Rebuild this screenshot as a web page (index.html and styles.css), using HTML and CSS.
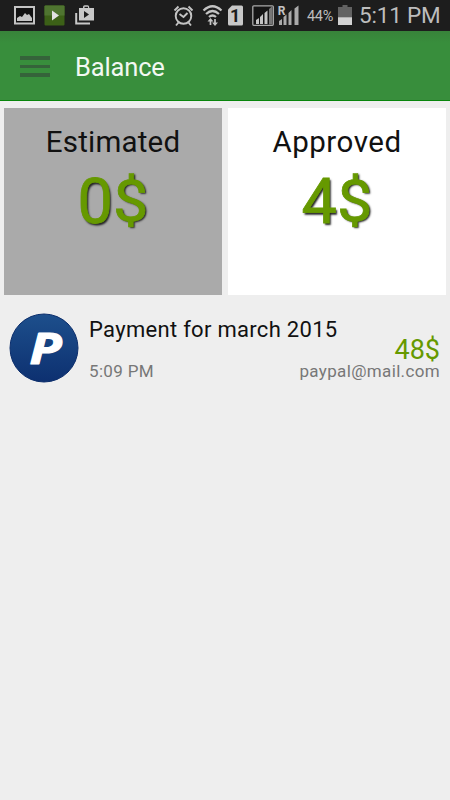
FILE: index.html
```html
<!DOCTYPE html>
<html lang="en">
<head>
<meta charset="utf-8">
<title>Balance</title>
<link rel="stylesheet" href="styles.css">
</head>
<body>
<header class="status">
  <svg class="status-icons" width="100" height="31" viewBox="0 0 100 31">
    <rect x="15" y="7" width="19" height="16.5" fill="#111" stroke="#c4c4c4" stroke-width="2"/>
    <path d="M17 21v-3l3-2 2 1 3-4 2 2 2-1 3 4v3z" fill="#c4c4c4"/>
    <rect x="44.5" y="5.500" width="20" height="20" rx="1" fill="#3c6017"/>
    <path d="M44.500 6.500q0-1 1-1h18q1 0 1 1v9h-20z" fill="#4f7430"/>
    <path d="M52 10.500v10l7-5z" fill="#e2e2e2"/>
    <path d="M79 8h4V7q0-1.700 1.700-1.700h2.800q1.700 0 1.700 1.700v1H94v12.500H79zm5.500 0H88V6.800h-3.500z" fill="#c8c8c8" fill-rule="evenodd"/>
    <path d="M84 11v7l5-3.500z" fill="#1c1c1c"/>
    <path d="M76.200 13v10.500H90" fill="none" stroke="#c8c8c8" stroke-width="2"/>
  </svg>
  <svg class="status-icons" width="130" height="31" viewBox="170 0 130 31">
    <g fill="none" stroke="#c4c4c4" stroke-width="1.900">
      <circle cx="183.500" cy="16" r="7.800"/>
      <path d="M179.500 14l4 3 4-4M178.500 22.500l-2.500 3M188.500 22.500l2.500 3M174.500 10.500l4-4M192.500 10.500l-4-4"/>
      <path d="M203.500 10.500q9-8.500 18 0M206 14q6.500-6 13 0M209 17q3.500-3 7 0" stroke-width="2.200"/>
      <path d="M210.500 25v-5M215 19v5" stroke-width="1.700"/>
    </g>
    <path d="M207.500 21.500h6l-3-3.500zM212 22.500h6l-3 3.500z" fill="#c4c4c4"/>
    <path d="M228 9.500l4-4h9.500q1.500 0 1.500 1.500v17q0 1.500-1.500 1.500h-12q-1.500 0-1.500-1.500z" fill="#c8c8c8"/>
    <text class="sim" x="235.200" y="22.300">1</text>
    <rect x="252.800" y="5.800" width="20.500" height="19.500" rx="1" fill="#151515" stroke="#aaa" stroke-width="1.300"/>
    <path d="M269 9l3.500-3v18.500H269z" fill="#777"/>
    <path d="M256 24v-4l3-2v6zM260 24v-7l3-3v10zM264.500 24V13l3-2.500V24z" fill="#c4c4c4"/>
    <text class="roam" x="281.500" y="15">R</text>
    <path d="M279 25v-4l3-2v6zM283.500 25v-8l3-2.500V25zM288.500 25V13l3-3v15zM294.500 25V8.500l4-3V25z" fill="#aaa"/>
  </svg>
  <span class="percent">44%</span>
  <svg class="battery" width="15" height="31" viewBox="0 0 15 31">
    <path d="M0 7h4.500V5h5v2H14v18H0z" fill="#626262"/>
    <path d="M0 17.300h14V25H0z" fill="#d2d2d2"/>
  </svg>
  <span class="clock">5:11 PM</span>
</header>
<nav class="bar">
  <div class="menu"><i></i><i></i><i></i></div>
  <h1>Balance</h1>
</nav>
<main>
  <section class="cards">
    <div class="card estimated"><h2>Estimated</h2><p>0<span>$</span></p></div>
    <div class="card approved"><h2>Approved</h2><p>4<span>$</span></p></div>
  </section>
  <article class="payment">
    <svg class="logo" width="70" height="70" viewBox="0 0 70 70">
      <defs><linearGradient id="blue" x2="0" y2="1"><stop stop-color="#1d4f8c"/><stop offset="1" stop-color="#0d3070"/></linearGradient></defs>
      <circle cx="35" cy="35" r="34" fill="url(#blue)" stroke="#0c2e6c"/>
      <text class="logo-letter" transform="translate(20.500 50.500) scale(1.220 1)">P</text>
    </svg>
    <div class="details"><h3>Payment for march 2015</h3><span class="time">5:09 PM</span></div>
    <div class="amount"><strong>48$</strong><span>paypal@mail.com</span></div>
  </article>
</main>
</body>
</html>
```

FILE: styles.css
```css
* { box-sizing: border-box; margin: 0; padding: 0; }
body { width: 450px; height: 800px; overflow: hidden; background: #eee; color: #111; font-family: Roboto, sans-serif; }
h1, h2, h3, strong { font-weight: 400; }
svg { display: block; flex: none; }
.status { display: flex; height: 31px; background: #1d1d1d; color: #bdbdbd; white-space: nowrap; }
.status-icons + .status-icons { margin-left: 70px; }
.sim { font: 700 18px Roboto, sans-serif; text-anchor: middle; fill: #1c1c1c; }
.roam { font: 700 12px Roboto, sans-serif; text-anchor: middle; fill: #c4c4c4; }
.percent { width: 31px; margin-left: 7px; font-size: 14.500px; line-height: 33px; letter-spacing: -.3px; }
.clock { margin-left: 6px; font-size: 22.500px; letter-spacing: -.2px; line-height: 31px; }
.bar { display: flex; height: 70px; background: linear-gradient(#38833a, #388e3c 12px); border-bottom: 1px solid #08850b; }
.menu { display: flex; flex-direction: column; gap: 5px; width: 30px; margin: 25px 0 0 20px; }
.menu i { height: 3.500px; background: #35633a; }
.bar h1 { margin: 20px 0 0 25px; color: #f2f8f2; font-size: 25.500px; letter-spacing: -.15px; line-height: 32px; }
.cards { display: grid; grid-template-columns: 218px 218px; gap: 6px; padding: 7px 4px 0; }
.card { height: 187px; padding-top: 15px; text-align: center; }
.estimated { background: #aaa; }
.approved { background: #fff; }
.card h2 { font-size: 29.500px; letter-spacing: .2px; line-height: 38px; }
.card.approved h2 { letter-spacing: .5px; }
.card p { margin-top: 5px; color: #690; font-size: 63px; font-weight: 400; line-height: 72px; text-shadow: 1.500px 1.500px 2px #222; -webkit-text-stroke: .8px #690; }
.card p span { display: inline-block; transform: scaleY(.9); }
.payment { display: flex; height: 96px; padding: 18px 10px 0 9px; position: relative; }
.logo-letter { font: italic 700 43px "Open Sans", sans-serif; fill: #fff; stroke: #fff; stroke-width: 1.200px; stroke-linejoin: round; }
.details { margin-left: 10px; }
.details h3 { font-size: 22px; letter-spacing: .3px; line-height: 28px; margin-top: 3px; white-space: nowrap; }
.time, .amount span { color: #777; font-size: 17px; letter-spacing: .35px; }
.time { display: block; margin-top: 17px; line-height: 20px; }
.amount { position: absolute; right: 10px; top: 42px; text-align: right; }
.amount strong { display: block; color: #690; font-size: 27px; line-height: 26px; }
.amount span { display: block; line-height: 18px; margin-top: -1px; }
```
